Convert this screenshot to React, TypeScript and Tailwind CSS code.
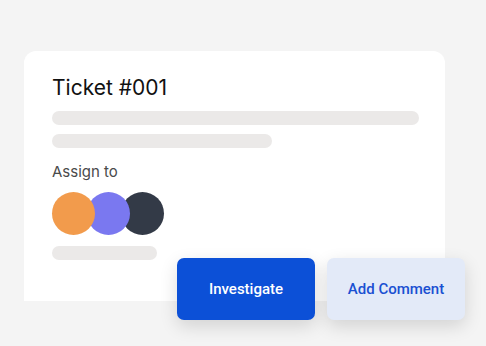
export default function App() {
  return (
    <div className="relative h-[346px] w-[486px] overflow-hidden bg-[#f4f4f4] pt-[51px] pl-[24px]">
      <div className="h-[250px] w-[421px] rounded-t-[12px] bg-white pt-[22px] pl-[28px] [font-family:Inter,'Noto_Sans',sans-serif]">
        <h1 className="text-[21px] leading-[30px] text-[#111]">Ticket #001</h1>
        <div className="mt-[8px] h-[14px] w-[367px] rounded-full bg-[#ebe9e8]" />
        <div className="mt-[9px] h-[14px] w-[220px] rounded-full bg-[#ebe9e8]" />
        <p className="mt-[14px] text-[15px] leading-[20px] text-[#4a4a4a]">Assign to</p>
        <div className="mt-[10px] flex">
          <div className="relative z-30 h-[43px] w-[43px] rounded-full bg-[#f29b4c]" />
          <div className="relative z-20 -ml-[8px] h-[43px] w-[43px] rounded-full bg-[#7a78f0]" />
          <div className="relative z-10 -ml-[9px] h-[43px] w-[43px] rounded-full bg-[#333a47]" />
        </div>
        <div className="mt-[11px] h-[14px] w-[105px] rounded-full bg-[#ebe9e8]" />
      </div>
      <div className="absolute top-[258px] left-[177px] flex gap-[12px] [font-family:Roboto,sans-serif]">
        <button className="flex h-[62px] w-[138px] items-center justify-center rounded-[7px] bg-[#0c50d7] text-[15px] font-medium text-white shadow-[0_6px_18px_rgba(0,0,0,0.14)]">
          Investigate
        </button>
        <button className="flex h-[62px] w-[138px] items-center justify-center rounded-[7px] bg-[#e3eaf8] text-[15px] font-medium text-[#1a50d2] shadow-[0_6px_18px_rgba(0,0,0,0.14)]">
          Add Comment
        </button>
      </div>
    </div>
  );
}
